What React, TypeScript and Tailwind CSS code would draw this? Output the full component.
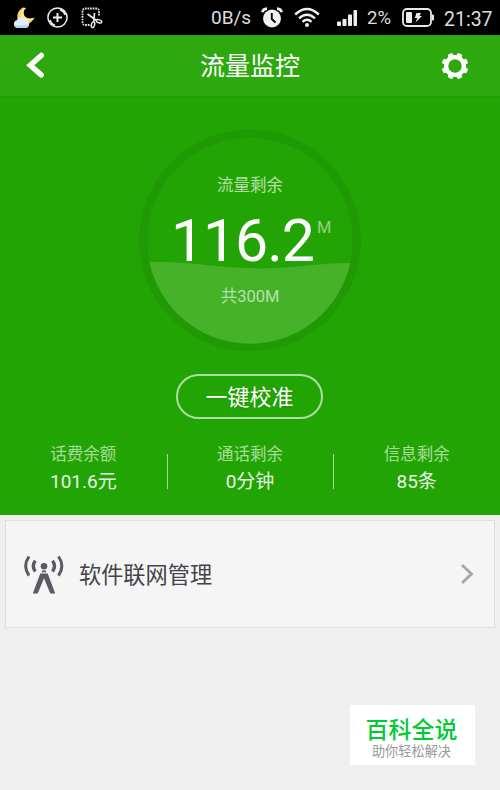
import type { ReactNode } from "react";

interface Stat {
  label: string;
  value: string;
}

const stats: Stat[] = [
  { label: "话费余额", value: "101.6元" },
  { label: "通话剩余", value: "0分钟" },
  { label: "信息剩余", value: "85条" },
];

function StatusBar() {
  return (
    <div className="flex h-[35px] items-start bg-black text-[#dedede]">
      {/* Weather */}
      <svg className="mt-[7px] ml-[13px] w-[22px] shrink-0" height="22" viewBox="0 0 22 22">
        <path d="M9.500 .8C4.500 4 3 9.500 5.500 13.500c3 5.500 12 5.500 16-3-4.500 2-9 1-10.500-2.500C10 5.500 10.500 3 13 1.200 12 .5 10.500.4 9.500.8z" fill="#f3d368" />
        <path d="M11 1C7.500 4.500 7 10 10 12.500c3 2.500 8 1.500 11-1.500-5 1.500-9 .5-10.200-3C10 5.500 10.500 3 12.500 1.200z" fill="#ffeb9e" />
        <path d="M4.500 21a4 4 0 0 1-.7-7.800 4.600 4.600 0 0 1 8.400-.4 4.200 4.200 0 0 1 1 8.200z" fill="#dfeeff" />
        <path d="M2 17.500c3 1.500 9 1.500 13.500-.5-.3 2.500-1.300 4-3 4H5c-2 0-3-1.500-3-3.500z" fill="#b5d2fa" />
      </svg>
      {/* Data saver */}
      <svg className="mt-[7px] ml-[12px] w-[21px] shrink-0" height="21" viewBox="0 0 21 21" fill="none" stroke="#eee">
        <circle cx="10.500" cy="10.500" r="9.600" strokeWidth="1.500" />
        <path d="M13 2.800A8 8 0 0 1 18.200 8M8 18.200A8 8 0 0 1 2.800 13" strokeWidth="1.600" />
        <path d="M10.500 6v9M6 10.500h9" strokeWidth="2" />
      </svg>
      {/* Screenshot */}
      <svg className="mt-[7px] ml-[13px] w-[22px] shrink-0" height="22" viewBox="0 0 22 22" fill="none" stroke="#e5e5e5">
        <path d="M8.500 18H4.500Q1.500 18 1.500 15V4.500Q1.500 1.500 4.500 1.500H15Q18 1.500 18 4.500V9" strokeWidth="1.800" strokeDasharray="1.700 .9" />
        <path d="M6.500 7l9 6.500M13.500 6l-.7 8.500" strokeWidth="1.700" />
        <ellipse cx="12" cy="17.700" rx="1.600" ry="2.900" transform="rotate(15 12 17.700)" strokeWidth="1.500" />
        <ellipse cx="18" cy="14.300" rx="2.800" ry="1.500" transform="rotate(15 18 14.300)" strokeWidth="1.500" />
      </svg>
      <span className="mt-[6px] ml-[108px] w-[50px] text-[19px] leading-[24px] whitespace-nowrap">0B/s</span>
      {/* Alarm */}
      <svg className="mt-[7px] w-[22px] shrink-0" height="22" viewBox="0 0 22 22">
        <circle cx="11" cy="11.500" r="9" fill="#f0f0f0" />
        <path d="M10.800 6v6l3.700 3.500" fill="none" stroke="#000" strokeWidth="1.800" />
        <path d="M1.300 5.300Q2 1.800 6 1.600M20.700 5.300Q20 1.800 16 1.600" fill="none" stroke="#f0f0f0" strokeWidth="2.600" />
      </svg>
      {/* Wifi */}
      <svg className="mt-[7px] ml-[11px] w-[26px] shrink-0" height="21" viewBox="0 0 26 21" fill="none" stroke="#eee" strokeWidth="2.400">
        <path d="M1.200 7.500Q13-3.500 24.800 7.500M5 11.400Q13 4 21 11.400M8.500 14.800Q13 10.800 17.500 14.800" />
        <circle cx="13" cy="18" r="2" fill="#eee" stroke="none" />
      </svg>
      {/* Signal */}
      <svg className="mt-[10px] ml-[17px] w-[20px] shrink-0" height="16" viewBox="0 0 20 16" fill="#eee">
        <rect x="0" y="11.500" width="4" height="4.500" rx=".8" />
        <rect x="5.500" y="9" width="4" height="7" rx=".8" />
        <rect x="11" y="4.500" width="4" height="11.500" rx=".8" />
        <rect x="16.500" y="0" width="3.500" height="16" rx=".8" />
      </svg>
      <span className="mt-[7px] ml-[10px] w-[34px] text-[18.500px] leading-[23px] whitespace-nowrap">2%</span>
      {/* Battery */}
      <svg className="mt-[8px] ml-px w-[33px] shrink-0" height="20" viewBox="0 0 33 20">
        <rect x="1" y="1" width="28" height="17" rx="4" fill="none" stroke="#e8e8e8" strokeWidth="1.800" />
        <path d="M30 6.500h1q1 0 1 1v4q0 1-1 1H30z" fill="#e8e8e8" />
        <rect x="4" y="4" width="6" height="11" rx="1" fill="#eee" />
        <path d="M14.500 5h4.500l-1.500 3h2.500l-6.500 6.500 1.800-4.500h-2.500z" fill="#eee" />
      </svg>
      <span className="mt-[7px] ml-[9px] text-[19.500px] leading-[25px]">21:37</span>
    </div>
  );
}

function Header() {
  return (
    <header className="flex h-[61px] items-start bg-[#2da80f]">
      <svg className="mt-[16px] ml-[26px]" width="20" height="28" viewBox="0 0 20 28" fill="none" stroke="#fff" strokeWidth="5.400" strokeLinecap="round" strokeLinejoin="miter">
        <path d="M15.300 4.400L4.200 14.200l11.100 9.800" />
      </svg>
      <h1 className="mt-[15px] ml-[154px] w-[100px] text-[25px] leading-[34px] whitespace-nowrap text-white">流量监控</h1>
      <svg className="mt-[18px] ml-[142px]" width="26" height="26" viewBox="0 0 26 26">
        <circle cx="13" cy="13" r="8.900" fill="none" stroke="#fff" strokeWidth="4.400" />
        {[22.5, 67.5, 112.5, 157.5, 202.5, 247.5, 292.5, 337.5].map((angle) => (
          <rect key={angle} x="10.400" y="-.3" width="5.200" height="4.500" rx="1.300" fill="#fff" transform={`rotate(${angle} 13 13)`} />
        ))}
      </svg>
    </header>
  );
}

function Gauge({ children }: { children: ReactNode }) {
  return (
    <div className="mx-auto grid h-[222px] w-[222px]">
      <svg className="col-start-1 row-start-1" width="222" height="222" viewBox="0 0 222 222">
        <circle cx="111" cy="111.500" r="106.800" fill="none" stroke="#209a04" strokeWidth="8.400" />
        {/* Remaining level */}
        <path d="M10.500 133.200C52 132 73 139 121 139.400C153 139.500 177 134.500 211.300 134.100A102.700 102.700 0 0 1 10.500 133.200z" fill="#45b22a" />
      </svg>
      <div className="col-start-1 row-start-1">{children}</div>
    </div>
  );
}

export default function App() {
  return (
    <div className="flex h-[790px] w-[500px] flex-col overflow-hidden bg-[#efefef] font-['Roboto','Noto_Sans_CJK_SC',sans-serif]">
      <StatusBar />
      <Header />

      <main className="h-[419px] border-t border-[#249a0a] bg-[#23a405] pt-[32px]">
        <Gauge>
          <p className="mt-[45px] text-center text-[16.500px] leading-[24px] text-[#b2e0a8]">流量剩余</p>
          <div className="mt-[8px] ml-[32px] flex h-[70px] items-start">
            <span className="w-[146px] text-[59px] leading-[70px] tracking-[-1.100px] text-white">116.2</span>
            <span className="mt-[11px] w-[14px] text-[16.500px] leading-[22px] text-[#91d382]">M</span>
          </div>
          <p className="mt-[9px] text-center text-[16.500px] leading-[24px] text-[#b5e2ab]">共300M</p>
        </Gauge>

        <button
          type="button"
          className="mt-[23px] ml-[176px] block h-[45px] w-[147px] rounded-full border-2 border-[#aedda3] text-[22px] text-white [text-shadow:0_1px_2px_#16750066]"
        >
          <span className="block pt-[2px] leading-[39px]">一键校准</span>
        </button>

        <div className="mt-[23px] grid grid-cols-3">
          {stats.map((stat, index) => (
            <div key={stat.label} className="flex items-center">
              <div className="flex-1 text-center">
                <p className="text-[16.500px] leading-[26px] text-[#a7dc9b]">{stat.label}</p>
                <p className="text-[19px] leading-[28px] text-[#e6f6e3]">{stat.value}</p>
              </div>
              {index < 2 && <div className="mt-[4px] -mr-[1px] h-[35px] w-px bg-[#a4d99a]" />}
            </div>
          ))}
        </div>
      </main>

      {/* Network management row */}
      <div className="mx-[5px] mt-[5px] flex h-[108px] items-start border border-[#dfdfdf] bg-[#f5f5f5]">
        <svg className="mt-[34px] ml-[18px]" width="40" height="40" viewBox="0 0 40 40" fill="none" stroke="#595a62">
          <path d="M5 1.500Q-1.700 11 5 20.700M34.500 1.500Q41.200 11 34.500 20.700" strokeWidth="3" />
          <path d="M11.300 5.700Q7.300 11 11.300 16.500M28.500 5.700Q32.500 11 28.500 16.500" strokeWidth="3.400" />
          <circle cx="20" cy="11.200" r="3.300" fill="#595a62" stroke="none" />
          <path d="M17.800 15.500h4.200v1.800h-4.200z" fill="#595a62" stroke="none" />
          <path d="M16.300 18.500h7.400L31.200 38.500h-4.900L20 23.300l-6.300 15.200H8.800z" fill="#595a62" stroke="none" />
        </svg>
        <span className="mt-[37px] ml-[15px] text-[22.200px] leading-[34px] text-[#43434b]">软件联网管理</span>
        <svg className="mt-[42px] mr-[20px] ml-auto" width="14" height="22" viewBox="0 0 14 22" fill="none" stroke="#a4a7aa" strokeWidth="2.800">
          <path d="M2 2l9.500 9L2 20" />
        </svg>
      </div>

      <div className="mt-[77px] mr-[25px] h-[60px] w-[125px] self-end bg-white pt-[11px] text-center">
        <p className="pr-[2px] text-[23px] leading-[30px] font-medium text-[#00cc33]">百科全说</p>
        <p className="-mt-[2px] pr-[2px] text-[13.200px] leading-[15px] text-[#999]">助你轻松解决</p>
      </div>
    </div>
  );
}
